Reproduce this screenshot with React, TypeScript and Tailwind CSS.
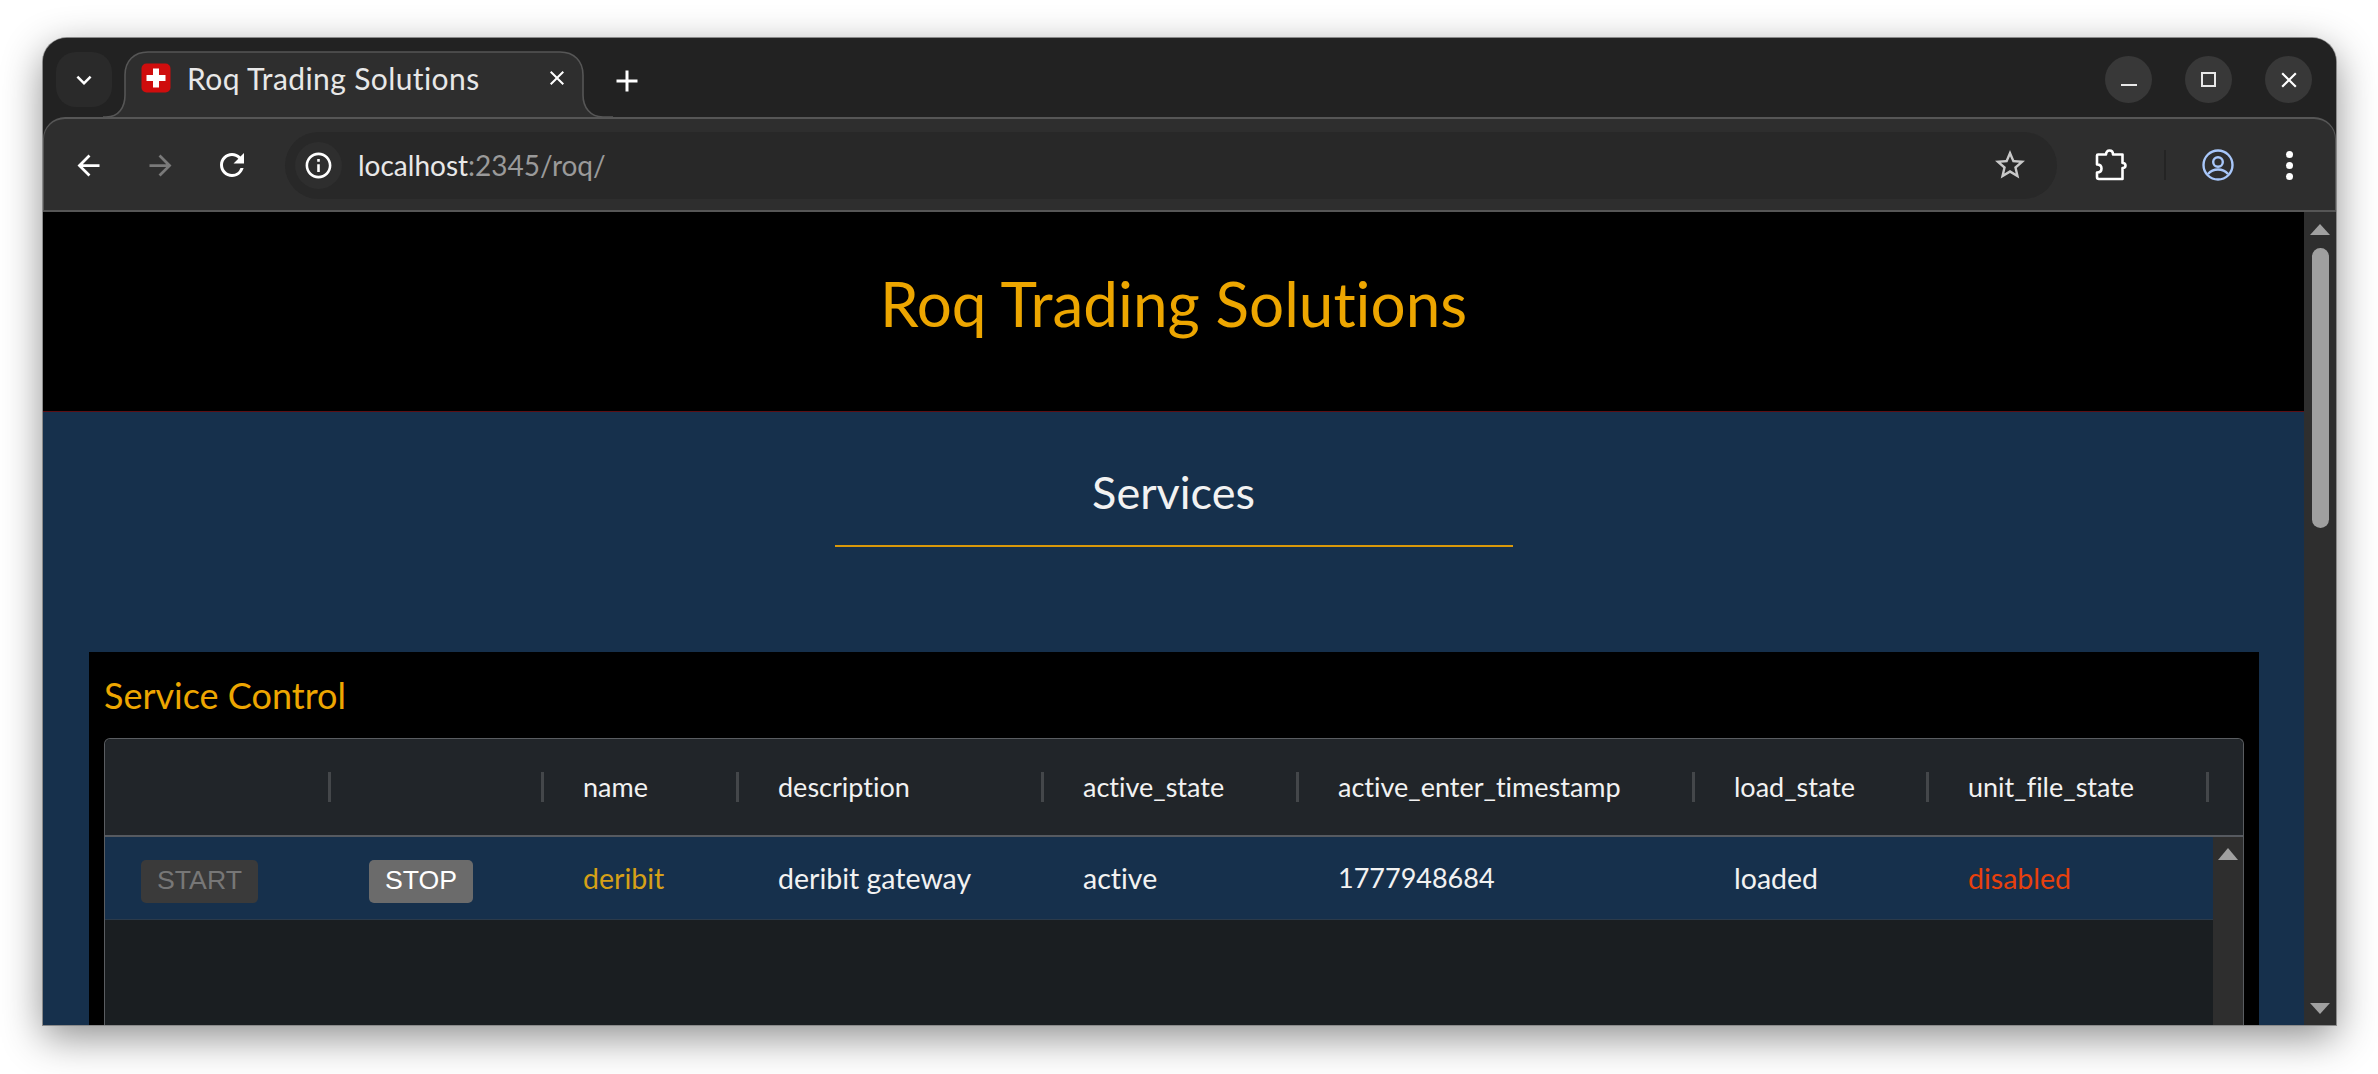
import { MdAdd, MdArrowBack, MdArrowForward, MdClose, MdKeyboardArrowDown, MdOutlineInfo, MdRefresh, MdStarBorder } from "react-icons/md";

const ubuntu = "font-['Lato','Noto_Sans',sans-serif] [font-variant-ligatures:none]";

const headers = [
  { label: "", width: "w-[226px]" },
  { label: "", width: "w-[213px]" },
  { label: "name", width: "w-[195px]" },
  { label: "description", width: "w-[305px]" },
  { label: "active_state", width: "w-[255px]" },
  { label: "active_enter_timestamp", width: "w-[396px]" },
  { label: "load_state", width: "w-[234px]" },
  { label: "unit_file_state", width: "w-[280px]" },
];

function WindowButton({ children }: { children: React.ReactNode }) {
  return <div className="flex h-[47px] w-[47px] items-center justify-center rounded-full bg-[#383838]">{children}</div>;
}

function Favicon() {
  return (
    <svg width="30" height="30" viewBox="0 0 30 30" className="shrink-0">
      <rect x="0.5" y="0.5" width="29" height="29" rx="5" fill="#cf0d0d" />
      <path d="M12 5.5h6v6.500h6.500v6H18v6.500h-6V18H5.500v-6H12z" fill="#fff" />
    </svg>
  );
}

function TabShape() {
  return (
    <svg width="510" height="67" viewBox="0 0 510 67" className="absolute bottom-0 left-0" fill="none">
      <path
        d="M0 66H3C16 66 22 56 22 44V24C22 10 31 1 45 1H457C471 1 480 10 480 24V44C480 56 487 66 500 66H510"
        fill="#2e2e2e"
        stroke="#565656"
        strokeWidth="1.600"
      />
    </svg>
  );
}

function ExtensionIcon() {
  return (
    <svg width="34" height="34" viewBox="0 0 34 34" fill="none" stroke="#fff" strokeWidth="2.600" strokeLinejoin="round">
      <path d="M5 6.500H13C13 4 14.500 2.500 16.500 2.500S20 4 20 6.500H29.500V15C31.500 15 32.500 16 32.500 17.500S31.500 20 29.500 20V31H6C4.500 31 4 30 4 29V24.500C7 24.500 8.500 23 8.500 20.500S7 16.500 4 16.500V7.500C4 7 4.500 6.500 5 6.500Z" />
    </svg>
  );
}

function ProfileIcon() {
  return (
    <svg width="32" height="32" viewBox="0 0 32 32" fill="none" stroke="#a8c7fa" strokeWidth="2.400">
      <circle cx="16" cy="16" r="14.500" />
      <circle cx="16" cy="13" r="4.800" />
      <path d="M6 25C9 21.500 12 20.500 16 20.500S23 21.500 26 25" />
    </svg>
  );
}

function TitleBar() {
  return (
    <div className="relative flex h-[79px] shrink-0 items-start bg-[#222222] pr-[24px] pt-[14px]">
      <div className="ml-[13px] flex h-[55px] w-[56px] items-center justify-center rounded-[20px] bg-[#2a2a2a] text-white">
        <MdKeyboardArrowDown size={30} />
      </div>
      <div className="relative z-10 ml-[-9px] flex h-[66px] w-[502px] shrink-0 items-start pl-[38px] pt-[11px]">
        <TabShape />
        <div className="relative flex h-[30px] items-center">
          <Favicon />
          <span className={`ml-[16px] w-[358px] text-[30px] leading-[30px] tracking-[0.4px] text-[#e8e8e8] ${ubuntu}`}>Roq Trading Solutions</span>
          <MdClose size={24} className="text-white" />
        </div>
      </div>
      <div className="ml-[4px] mt-[11px] flex text-white">
        <MdAdd size={36} />
      </div>
      <div className="ml-auto mt-[4px] flex gap-[33px]">
        <WindowButton>
          <div className="mt-[10px] h-[2px] w-[16px] bg-[#e8e8e8]" />
        </WindowButton>
        <WindowButton>
          <div className="h-[15px] w-[15px] border-2 border-[#e8e8e8]" />
        </WindowButton>
        <WindowButton>
          <MdClose size={26} className="text-white" />
        </WindowButton>
      </div>
    </div>
  );
}

function Toolbar() {
  return (
    <div className="flex h-[95px] shrink-0 items-center rounded-t-[22px] border-x border-t-2 border-b-2 border-[#565656] bg-[#2e2e2e] pt-px">
      <MdArrowBack size={33} className="ml-[28px] text-white" />
      <MdArrowForward size={33} className="ml-[39px] text-[#7a7a7a]" />
      <MdRefresh size={36} className="ml-[37px] text-white" />
      <div className="ml-[35px] flex h-[67px] w-[1772px] items-center rounded-full bg-[#282828] pl-[10px] pr-[29px]">
        <div className="flex h-[47px] w-[47px] items-center justify-center rounded-full bg-[#2e2e2e] text-white">
          <MdOutlineInfo size={31} />
        </div>
        <span className={`ml-[16px] text-[28px] text-[#e8e8e8] ${ubuntu}`}>
          localhost<span className="text-[#9a9a9a]">:2345/roq/</span>
        </span>
        <MdStarBorder size={36} className="ml-auto text-[#c8c8c8]" />
      </div>
      <div className="ml-[36px] flex">
        <ExtensionIcon />
      </div>
      <div className="ml-[37px] h-[30px] w-[2px] bg-[#242424]" />
      <div className="ml-[36px] flex">
        <ProfileIcon />
      </div>
      <div className="ml-[52px] flex flex-col gap-[4px]">
        <div className="h-[7px] w-[7px] rounded-full bg-white" />
        <div className="h-[7px] w-[7px] rounded-full bg-white" />
        <div className="h-[7px] w-[7px] rounded-full bg-white" />
      </div>
    </div>
  );
}

function Scrollbar() {
  return (
    <div className="flex w-[32px] shrink-0 flex-col items-center bg-[#2e2e2e] pt-[12px]">
      <div className="h-0 w-0 border-x-[10px] border-b-[11px] border-x-transparent border-b-[#a0a0a0]" />
      <div className="mt-[13px] h-[280px] w-[17px] rounded-full bg-[#9f9f9f]" />
      <div className="mt-auto mb-[11px] h-0 w-0 border-x-[10px] border-t-[11px] border-x-transparent border-t-[#a0a0a0]" />
    </div>
  );
}

function ServiceTable() {
  return (
    <div className="mx-[15px] flex h-[300px] flex-col rounded-t-[6px] border border-b-0 border-[#5a5d61] bg-[#1a1e21]">
      <div className={`flex h-[98px] shrink-0 items-center rounded-t-[6px] border-b-2 border-[#565a60] bg-[#212529] text-[27px] text-[#f2f2f2] ${ubuntu}`}>
        {headers.map((h, i) => (
          <div key={i} className={`flex h-[30px] items-center border-r-[3px] border-[#44474a] pl-[39px] ${h.width}`}>
            {h.label}
          </div>
        ))}
      </div>
      <div className="flex min-h-0 flex-1">
        <div className="min-w-0 flex-1">
          <div className={`flex h-[83px] items-center border-b border-[#2b3a4a] bg-[#16304c] text-[28.500px] text-[#f2f2f2] ${ubuntu}`}>
            <div className="w-[226px] pl-[36px] pt-[6px]">
              <button className="flex h-[43px] w-[117px] items-center justify-center rounded-[5px] bg-[#3a3a3a] pb-[2px] font-['Liberation_Sans',sans-serif] text-[26.670px] text-[#777777]">
                START
              </button>
            </div>
            <div className="w-[213px] pl-[38px] pt-[6px]">
              <button className="flex h-[43px] w-[104px] items-center justify-center rounded-[5px] bg-[#6b6b6b] pb-[2px] font-['Liberation_Sans',sans-serif] text-[26.670px] text-white">
                STOP
              </button>
            </div>
            <div className="w-[195px] pl-[39px] text-[#d6a017]">deribit</div>
            <div className="w-[305px] pl-[39px]">deribit gateway</div>
            <div className="w-[255px] pl-[39px]">active</div>
            <div className="w-[396px] pl-[39px] text-[27px]">1777948684</div>
            <div className="w-[234px] pl-[39px]">loaded</div>
            <div className="pl-[39px] text-[#e8400c]">disabled</div>
          </div>
        </div>
        <div className="flex w-[30px] shrink-0 justify-center bg-[#2e2e2e] pt-[11px]">
          <div className="h-0 w-0 border-x-[10px] border-b-[12px] border-x-transparent border-b-[#a0a0a0]" />
        </div>
      </div>
    </div>
  );
}

export default function App() {
  return (
    <div className="h-[1074px] w-[2378px] overflow-hidden bg-white pl-[43px] pt-[38px]">
      <div className="flex h-[987px] w-[2293px] flex-col overflow-hidden rounded-t-[24px] bg-[#222222] shadow-[0_0_0_1px_#8a8a8a,0_12px_40px_rgba(0,0,0,0.45)]">
        <TitleBar />
        <Toolbar />
        <div className="flex min-h-0 flex-1 bg-[#16304c]">
          <main className="min-w-0 flex-1">
            <header className="flex h-[200px] items-start justify-center border-b border-[#5c0f14] bg-black pt-[51px]">
              <h1 className={`text-[62px] leading-[80px] text-[#eda600] ${ubuntu}`}>Roq Trading Solutions</h1>
            </header>
            <div className="flex flex-col items-center pt-[50px]">
              <h2 className={`text-[45px] leading-[60px] text-[#f2f2f2] ${ubuntu}`}>Services</h2>
              <div className="mt-[23px] h-[2px] w-[678px] bg-[#d9980a]" />
            </div>
            <section className="ml-[46px] mr-[45px] mt-[105px] h-[400px] bg-black">
              <h3 className={`px-[15px] pb-[20px] pt-[20px] text-[36px] leading-[46px] text-[#eda600] ${ubuntu}`}>Service Control</h3>
              <ServiceTable />
            </section>
          </main>
          <Scrollbar />
        </div>
      </div>
    </div>
  );
}
